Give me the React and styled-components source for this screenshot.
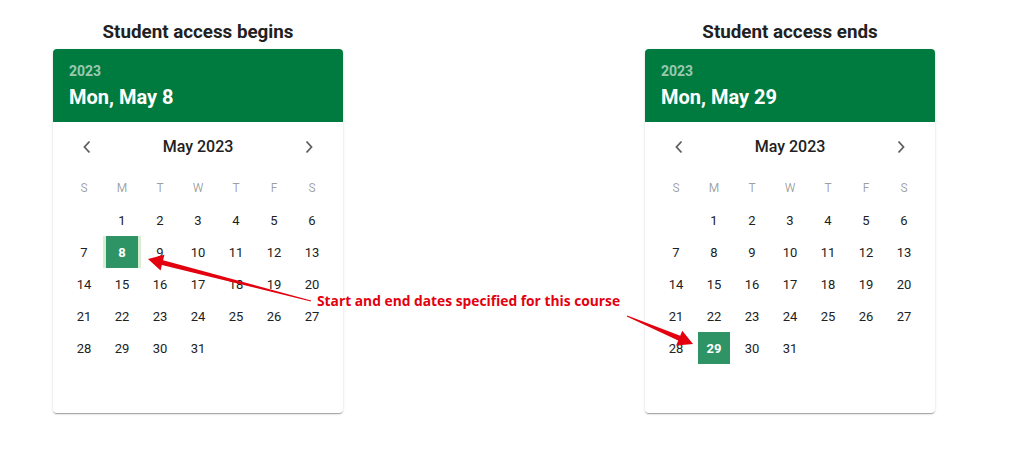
import React from "react";
import styled, { createGlobalStyle } from "styled-components";

const Global = createGlobalStyle`
  html, body { margin: 0; padding: 0; background: #fff; }
  body { font-family: Roboto, "Noto Sans", sans-serif; }
`;

const Page = styled.div`
  position: relative;
  width: 1010px;
  height: 457px;
  display: flex;
  gap: 302px;
  padding: 20px 0 0 53px;
  box-sizing: border-box;
`;

const Column = styled.div`
  width: 290px;
  display: flex;
  flex-direction: column;
  align-items: center;
`;

const Title = styled.h2`
  margin: 0 0 5px;
  font-size: 18.8px;
  line-height: 24px;
  font-weight: 700;
  color: #212121;
`;

const Card = styled.div`
  width: 290px;
  height: 364px;
  border-radius: 4px;
  overflow: hidden;
  background: #fff;
  box-shadow: 0 2px 1px -1px rgba(0,0,0,0.2), 0 1px 1px 0 rgba(0,0,0,0.14), 0 1px 3px 0 rgba(0,0,0,0.12);
`;

const Header = styled.div`
  background: #007b40;
  height: 73px;
  box-sizing: border-box;
  padding: 12px 16px 0;
  display: flex;
  flex-direction: column;
  gap: 2px;
`;

const Year = styled.div`
  font-size: 14px;
  line-height: 20px;
  font-weight: 700;
  color: rgba(255,255,255,0.6);
`;

const DateText = styled.div`
  font-size: 20px;
  line-height: 28px;
  font-weight: 700;
  color: #fff;
`;

const MonthRow = styled.div`
  height: 49px;
  padding: 0 25px 1px;
  display: flex;
  align-items: center;
  justify-content: space-between;
`;

const NavButton = styled.button`
  width: 18px;
  height: 18px;
  padding: 0;
  border: 0;
  background: none;
  display: flex;
  align-items: center;
  justify-content: center;
  color: #5f5f5f;
`;

const MonthLabel = styled.div`
  font-size: 16px;
  font-weight: 500;
  color: #212121;
`;

const Grid = styled.div`
  display: grid;
  grid-template-columns: repeat(7, 38px);
  grid-auto-rows: 32px;
  padding: 0 12px;
`;

const WeekDay = styled.div`
  display: flex;
  align-items: center;
  justify-content: center;
  font-size: 12px;
  color: rgba(0,0,0,0.38);
`;

const Cell = styled.div`
  display: flex;
  align-items: center;
  justify-content: center;
  background: ${(p) => (p.$halo ? "#d9edd3" : "transparent")};
`;

const Day = styled.div`
  width: 32px;
  height: 32px;
  display: flex;
  align-items: center;
  justify-content: center;
  font-size: 13px;
  font-weight: ${(p) => (p.$selected ? 700 : 400)};
  color: ${(p) => (p.$selected ? "#fff" : "#212121")};
  background: ${(p) => (p.$selected ? "#2e9466" : "transparent")};
`;

const Note = styled.div`
  position: absolute;
  left: 317px;
  top: 292px;
  font-family: "Open Sans", "DejaVu Sans", sans-serif;
  font-size: 13.8px;
  line-height: 18px;
  font-weight: 700;
  color: #e3000f;
  white-space: nowrap;
`;

const Overlay = styled.svg`
  position: absolute;
  left: 0;
  top: 0;
  pointer-events: none;
`;

const Chevron = ({ dir }) => (
  <svg width="10" height="14" viewBox="0 0 10 14">
    <path
      d={dir === "left" ? "M7.5 1.5 L2.5 7 L7.5 12.5" : "M2.5 1.5 L7.5 7 L2.5 12.5"}
      fill="none"
      stroke="currentColor"
      strokeWidth="1.8"
    />
  </svg>
);

const WEEK = ["S", "M", "T", "W", "T", "F", "S"];

function Calendar({ title, date, selected, halo }) {
  const cells = [null];
  for (let d = 1; d <= 31; d++) cells.push(d);
  return (
    <Column>
      <Title>{title}</Title>
      <Card>
        <Header>
          <Year>2023</Year>
          <DateText>{date}</DateText>
        </Header>
        <MonthRow>
          <NavButton><Chevron dir="left" /></NavButton>
          <MonthLabel>May 2023</MonthLabel>
          <NavButton><Chevron dir="right" /></NavButton>
        </MonthRow>
        <Grid>
          {WEEK.map((w, i) => (
            <WeekDay key={"w" + i}>{w}</WeekDay>
          ))}
          {cells.map((d, i) => (
            <Cell key={i} $halo={halo && d === selected}>
              {d && <Day $selected={d === selected}>{d}</Day>}
            </Cell>
          ))}
        </Grid>
      </Card>
    </Column>
  );
}

export default function App() {
  return (
    <>
      <Global />
      <Page>
        <Calendar title="Student access begins" date="Mon, May 8" selected={8} halo />
        <Calendar title="Student access ends" date="Mon, May 29" selected={29} />
        <Note>Start and end dates specified for this course</Note>
        <Overlay width="1010" height="457" viewBox="0 0 1010 457">
          <polygon
            fill="#e3000f"
            points="148,259 164.4,254.8 163.1,260.2 311.1,300.5 310.9,301.5 161.9,265 160.6,270.4"
          />
          <polygon
            fill="#e3000f"
            points="693,344 676.1,345.5 678.2,340.45 626.8,316.46 627.2,315.54 680.2,335.85 682.3,330.8"
          />
        </Overlay>
      </Page>
    </>
  );
}
